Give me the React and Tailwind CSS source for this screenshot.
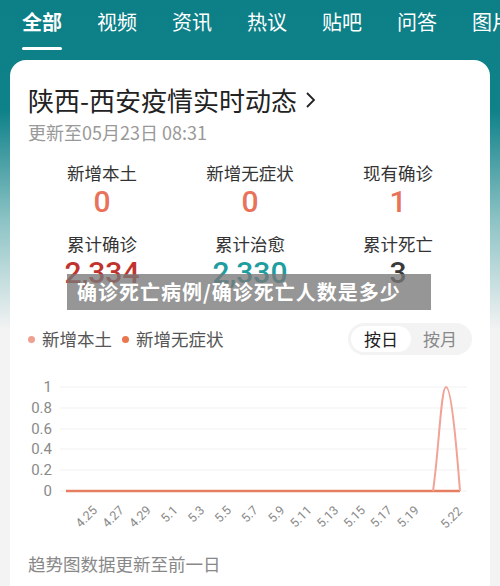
import React from 'react';

const tabs = ['全部', '视频', '资讯', '热议', '贴吧', '问答', '图片'];

const stats = [
  { label: '新增本土', value: '0', color: 'text-[#e8735a]' },
  { label: '新增无症状', value: '0', color: 'text-[#e8735a]' },
  { label: '现有确诊', value: '1', color: 'text-[#e8735a]' },
  { label: '累计确诊', value: '2,334', color: 'text-[#c0332e]' },
  { label: '累计治愈', value: '2,330', color: 'text-[#1f9d9f]' },
  { label: '累计死亡', value: '3', color: 'text-[#3a3a3a]' },
];

const xLabels = ['4.25', '4.27', '4.29', '5.1', '5.3', '5.5', '5.7', '5.9', '5.11', '5.13', '5.15', '5.17', '5.19'];
const yLabels = [
  { t: '1', y: 387 },
  { t: '0.8', y: 408 },
  { t: '0.6', y: 429 },
  { t: '0.4', y: 449 },
  { t: '0.2', y: 470 },
  { t: '0', y: 491 },
];

function Chart() {
  return (
    <svg width="444" height="170" viewBox="28 370 444 170" className="block mt-[15px]">
      {yLabels.map((l) => (
        <g key={l.t}>
          <line x1="60" x2="467" y1={l.y} y2={l.y} stroke="#f1f1f1" strokeWidth="1" />
          <text x="52" y={l.y + 5} textAnchor="end" fontSize="15" fill="#8a8a8a" fontFamily="Roboto, sans-serif">
            {l.t}
          </text>
        </g>
      ))}
      <path d="M66 491 L460 491" stroke="#e67f62" strokeWidth="2.5" fill="none" />
      <path
        d="M433 491 C439 450 441 387 446 387 C451 387 456 440 460 491"
        stroke="#f0a396"
        strokeWidth="2"
        fill="none"
      />
      {xLabels.map((t, i) => {
        const x = 98 + i * 26.8;
        return (
          <text
            key={t}
            x={x}
            y="511"
            textAnchor="end"
            fontSize="12.5"
            fill="#8a8a8a"
            fontFamily="Roboto, sans-serif"
            transform={`rotate(-45 ${x} 511)`}
          >
            {t}
          </text>
        );
      })}
      <text x="463" y="512" textAnchor="end" fontSize="12.5" fill="#8a8a8a" fontFamily="Roboto, sans-serif" transform="rotate(-45 463 512)">
        5.22
      </text>
    </svg>
  );
}

export default function App() {
  return (
    <div
      className="relative w-[500px] h-[586px] overflow-hidden bg-[linear-gradient(180deg,#0d7f87_0px,#0e8189_110px,#8cc3c5_220px,#f3f3f3_330px)]"
      style={{ fontFamily: '"Noto Sans CJK SC", "Noto Sans", sans-serif' }}
    >
      {/* tab bar */}
      <div className="flex h-[60px] pl-[22px] gap-[35px] text-white text-[20px] whitespace-nowrap">
        {tabs.map((t, i) => (
          <div key={t} className="relative shrink-0 pt-[8px] leading-[28px]">
            <span className={i === 0 ? 'font-bold' : 'font-normal'}>{t}</span>
            {i === 0 && <div className="absolute left-0 right-0 top-[47px] h-[3px] rounded-full bg-white" />}
          </div>
        ))}
      </div>

      {/* card */}
      <div className="mx-[10px] h-[560px] rounded-[16px] bg-white px-[18px] pt-[23px]">
        <div className="flex items-center text-[26px] leading-[34px] text-[#222]">
          陕西-西安疫情实时动态
          <svg width="14" height="22" viewBox="0 0 14 22" className="ml-[7px]">
            <path d="M3 4 L10 11 L3 18" stroke="#222" strokeWidth="1.8" fill="none" />
          </svg>
        </div>
        <div className="mt-[3px] text-[18px] leading-[24px] text-[#999]">更新至05月23日 08:31</div>

        <div className="grid grid-cols-3 mt-[17px] gap-y-[14px]">
          {stats.map((s) => (
            <div key={s.label} className="flex flex-col items-center">
              <div className="text-[17.5px] leading-[24px] text-[#333]">{s.label}</div>
              <div
                className={`text-[30px] leading-[33px] font-medium ${s.color}`}
                style={{ fontFamily: 'Roboto, "Noto Sans", sans-serif' }}
              >
                {s.value}
              </div>
            </div>
          ))}
        </div>

        <div className="flex items-center justify-between mt-[34px]">
          <div className="flex items-center text-[17.5px] leading-[24px] text-[#555]">
            <span className="w-[7px] h-[7px] rounded-full bg-[#f0a090] mr-[7px]" />
            新增本土
            <span className="w-[7px] h-[7px] rounded-full bg-[#e8764f] ml-[10px] mr-[7px]" />
            新增无症状
          </div>
          <div className="flex items-center h-[32px] w-[124px] rounded-full bg-[#f3f3f3] p-[3px] text-[17px]">
            <div className="flex items-center justify-center h-full w-[60px] rounded-full bg-white text-[#222]">按日</div>
            <div className="flex items-center justify-center h-full flex-1 text-[#888]">按月</div>
          </div>
        </div>

        <Chart />

        <div className="mt-[12px] text-[17.5px] leading-[24px] text-[#888]">趋势图数据更新至前一日</div>
      </div>

      {/* overlay banner */}
      <div className="absolute left-[67px] top-[274px] w-[364px] h-[36px] bg-[rgba(120,120,120,0.78)] flex items-center pl-[10px] text-white text-[20px] font-bold tracking-[1px] whitespace-nowrap">
        确诊死亡病例/确诊死亡人数是多少
      </div>
    </div>
  );
}
